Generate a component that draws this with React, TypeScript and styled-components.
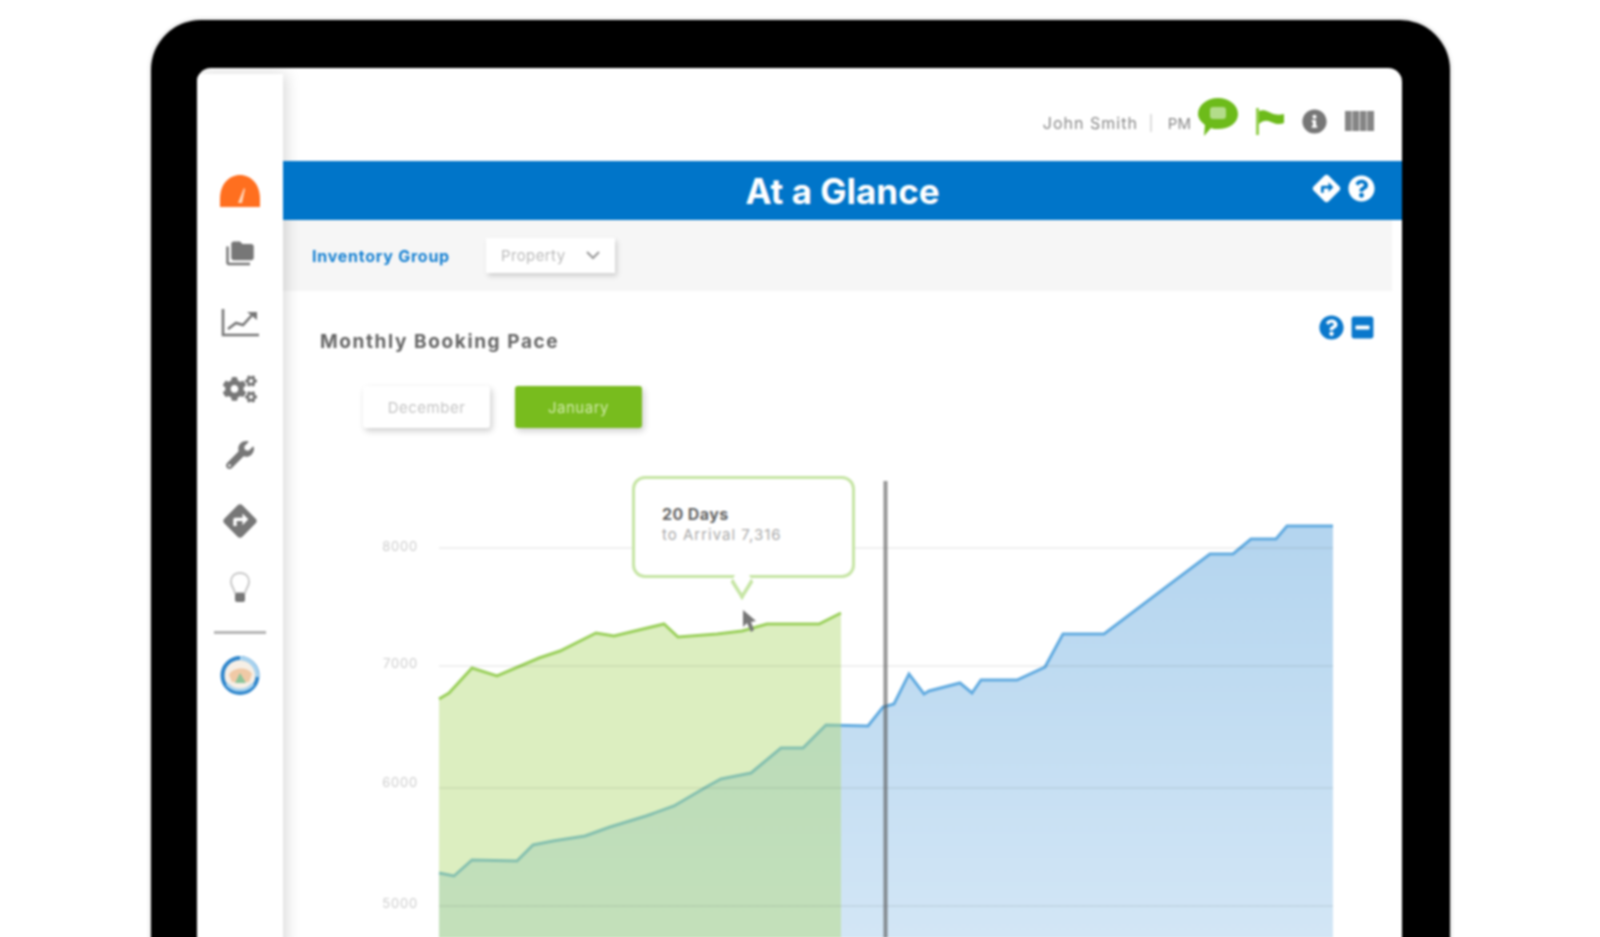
import React, { FC } from 'react';
import styled, { createGlobalStyle } from 'styled-components';
import { FaCogs, FaInfoCircle, FaMinusSquare, FaQuestionCircle, FaWrench } from 'react-icons/fa';
import { MdDirections, MdFolderCopy } from 'react-icons/md';

const GREEN_LINE = [
  [439, 698], [449, 692], [472, 667], [497, 675], [539, 657], [560, 650], [596, 632], [614, 635],
  [664, 623], [678, 636], [717, 633], [742, 630], [767, 623], [819, 623], [841, 612],
];
const BLUE_LINE = [
  [439, 872], [454, 875], [472, 859], [517, 860], [533, 844], [553, 840], [585, 835], [610, 826],
  [646, 815], [674, 805], [708, 785], [721, 778], [751, 772], [781, 747], [803, 747], [826, 724],
  [868, 725], [883, 706], [894, 703], [909, 673], [924, 693], [929, 690], [960, 682], [972, 692],
  [981, 679], [1017, 679], [1045, 666], [1063, 633], [1104, 633], [1210, 553], [1233, 553],
  [1251, 538], [1276, 538], [1287, 525], [1333, 525],
];
const GRID = [
  { y: 547, labelY: 546, label: '8000' },
  { y: 665, labelY: 663, label: '7000' },
  { y: 787, labelY: 782, label: '6000' },
  { y: 905, labelY: 903, label: '5000' },
];

const toPoints = (line: number[][]) => line.map(p => p.join(',')).join(' ');
const toArea = (line: number[][]) =>
  `${line[0][0]},937 ${toPoints(line)} ${line[line.length - 1][0]},937`;

const GaugeIcon: FC = () => (
  <svg width="40" height="32" viewBox="0 0 40 32">
    <path d="M0 32 V24 C0 9 9 0 20 0 C31 0 40 9 40 24 V32 Z" fill="#ff6f1f" />
    <path d="M18 28 L24 13 L25 14 L22 28 Z" fill="#ffd9bf" />
  </svg>
);

const TrendIcon: FC = () => (
  <svg width="38" height="28" viewBox="0 0 38 28" fill="none" stroke="#777" strokeWidth="2.6">
    <path d="M2 0 V26 H38" />
    <path d="M7 20 L15 14 L22 16 L32 5" />
    <path d="M26 3 H36 V11 Z" fill="#777" stroke="none" />
  </svg>
);

const BulbIcon: FC = () => (
  <svg width="20" height="31" viewBox="0 0 20 31">
    <path d="M10 1 C4 1 1 5 1 10 C1 14 4 16 5 21 H15 C16 16 19 14 19 10 C19 5 16 1 10 1 Z" fill="#fff" stroke="#c9c9c9" strokeWidth="2" />
    <rect x="5" y="21" width="10" height="9" rx="2" fill="#777" />
  </svg>
);

const GlobeIcon: FC = () => (
  <svg width="40" height="41" viewBox="0 0 40 41">
    <circle cx="20" cy="20.5" r="17.5" fill="#f6efe6" stroke="#2f86cc" strokeWidth="4" />
    <path d="M20 3 A17.5 17.5 0 0 1 37 22" fill="none" stroke="#a9d3ef" strokeWidth="4" />
    <path d="M9 20 C12 12 28 11 32 19 L29 27 L12 27 Z" fill="#f0c9a6" />
    <path d="M15 28 L20 18 L26 28 Z" fill="#8cc59a" />
    <path d="M7 29 A17 17 0 0 0 33 29" fill="none" stroke="#a9d3ef" strokeWidth="3" />
  </svg>
);

const ChatIcon: FC = () => (
  <svg width="40" height="38" viewBox="0 0 40 38">
    <path d="M20 0 C31 0 40 7 40 16 C40 25 31 31 20 31 C17 31 15 31 13 30 L6 38 L7 27 C3 24 0 20 0 16 C0 7 9 0 20 0 Z" fill="#6dbb1a" />
    <rect x="12" y="9" width="16" height="12" rx="3" fill="#b3dc8a" />
  </svg>
);

const FlagIcon: FC = () => (
  <svg width="28" height="27" viewBox="0 0 28 27">
    <rect x="0" y="0" width="3" height="27" fill="#95cf50" />
    <path d="M3 3 C8 1 11 3 15 5 C19 7 24 7 28 6 V15 C24 17 19 16 15 14 C11 12 7 12 3 16 Z" fill="#6dbb1a" />
  </svg>
);

const ColumnsIcon: FC = () => (
  <svg width="29" height="20" viewBox="0 0 29 20" fill="#858585">
    <rect x="0" y="0" width="6.6" height="20" />
    <rect x="7.4" y="0" width="6.6" height="20" />
    <rect x="14.8" y="0" width="6.6" height="20" />
    <rect x="22.2" y="0" width="6.8" height="20" />
  </svg>
);

const Chart: FC = () => (
  <svg width="1119" height="467" viewBox="283 470 1119 467" style={{ display: 'block' }}>
    <defs>
      <linearGradient id="blueFill" x1="0" y1="525" x2="0" y2="937" gradientUnits="userSpaceOnUse">
        <stop offset="0" stopColor="#5ba3dc" stopOpacity="0.46" />
        <stop offset="1" stopColor="#5ba3dc" stopOpacity="0.27" />
      </linearGradient>
    </defs>
    {GRID.map(g => (
      <text key={g.y} x="418" y={g.labelY + 4} textAnchor="end" fontSize="13" letterSpacing="0.8" fill="#cdcdcd" fontFamily="Inter, sans-serif">
        {g.label}
      </text>
    ))}
    <polygon points={toArea(BLUE_LINE)} fill="url(#blueFill)" />
    <polyline points={toPoints(BLUE_LINE)} fill="none" stroke="#62abe0" strokeWidth="3" />
    <polygon points={toArea(GREEN_LINE)} fill="#b1d973" fillOpacity="0.45" />
    <polyline points={toPoints(GREEN_LINE)} fill="none" stroke="#9bd05c" strokeWidth="3" />
    {GRID.map(g => (
      <line key={g.y} x1="439" x2="1333" y1={g.y} y2={g.y} stroke="#000" strokeOpacity="0.06" strokeWidth="2" />
    ))}
    <line x1="885.5" x2="885.5" y1="480" y2="937" stroke="#555" strokeOpacity="0.62" strokeWidth="4" />
    <path d="M743 609 L743 626 L747 622 L751 631 L754 629 L751 621 L756 620 Z" fill="#777" />
  </svg>
);

export default function App() {
  return (
    <Page>
      <GlobalStyle />
      <Device>
        <Screen>
          <Sidebar>
            <SideItem><GaugeIcon /></SideItem>
            <FolderItem><MdFolderCopy size={30} color="#777" /></FolderItem>
            <SideItem><TrendIcon /></SideItem>
            <SideItem><FaCogs size={34} color="#777" /></SideItem>
            <SideItem><FaWrench size={28} color="#777" /></SideItem>
            <SideItem><MdDirections size={40} color="#777" /></SideItem>
            <SideItem><BulbIcon /></SideItem>
            <SideRule />
            <GlobeWrap><GlobeIcon /></GlobeWrap>
          </Sidebar>
          <Main>
            <TopBar>
              <UserName>John Smith</UserName>
              <TopDivider />
              <Clock>PM</Clock>
              <ChatWrap><ChatIcon /></ChatWrap>
              <FlagIcon />
              <FaInfoCircle size={25} color="#777" />
              <ColumnsIcon />
            </TopBar>
            <TitleBar>
              <span />
              <PageTitle>At a Glance</PageTitle>
              <TitleActions>
                <MdDirections size={33} color="#fff" />
                <FaQuestionCircle size={27} color="#fff" />
              </TitleActions>
            </TitleBar>
            <FilterBar>
              <FilterLabel>Inventory Group</FilterLabel>
              <FilterSelect>
                Property
                <svg width="14" height="9" viewBox="0 0 14 9" fill="none" stroke="#999" strokeWidth="2">
                  <path d="M1 1 L7 7 L13 1" />
                </svg>
              </FilterSelect>
            </FilterBar>
            <SectionHead>
              <SectionTitle>Monthly Booking Pace</SectionTitle>
              <SectionActions>
                <FaQuestionCircle size={25} color="#0a78cc" />
                <FaMinusSquare size={25} color="#0a78cc" />
              </SectionActions>
            </SectionHead>
            <MonthRow>
              <MonthButton>December</MonthButton>
              <MonthButton $active>January</MonthButton>
            </MonthRow>
            <ChartWrap>
              <Chart />
              <Tooltip>
                <TooltipTitle>20 Days</TooltipTitle>
                <TooltipText>to Arrival 7,316</TooltipText>
              </Tooltip>
            </ChartWrap>
          </Main>
        </Screen>
      </Device>
    </Page>
  );
}

const GlobalStyle = createGlobalStyle`
  html, body {
    margin: 0;
    padding: 0;
    background: #fff;
    overflow: hidden;
  }
  body {
    font-family: Inter, "Open Sans", sans-serif;
  }
`;

const Page = styled.div`
  width: 1600px;
  height: 937px;
  overflow: hidden;
  background: #fff;
  padding: 20px 0 0 151px;
  box-sizing: border-box;
`;
const Device = styled.div`
  width: 1299px;
  height: 930px;
  box-sizing: border-box;
  padding: 48px 48px 0 46px;
  background: #000;
  border-radius: 50px 50px 0 0;
  box-shadow: 0 0 4px rgba(0, 0, 0, 0.25);
  filter: blur(1.2px);
`;
const Screen = styled.div`
  display: flex;
  height: 100%;
  background: #fff;
  border-radius: 14px 14px 0 0;
  overflow: hidden;
`;
const Sidebar = styled.div`
  position: relative;
  z-index: 1;
  flex: 0 0 86px;
  display: flex;
  flex-direction: column;
  align-items: center;
  padding: 84px 0 0 0;
  margin-top: 6px;
  box-sizing: border-box;
  background: #fff;
  box-shadow: 3px 0 14px rgba(0, 0, 0, 0.16);
`;
const SideItem = styled.div`
  flex: 0 0 66px;
  display: flex;
  align-items: center;
  justify-content: center;
  width: 100%;
  box-sizing: border-box;
`;
const FolderItem = styled(SideItem)`
  padding-bottom: 6px;
`;
const SideRule = styled.div`
  flex: 0 0 3px;
  width: 52px;
  margin-top: 11px;
  background: #b5b5b5;
`;
const GlobeWrap = styled.div`
  display: flex;
  margin-top: 21px;
`;
const Main = styled.div`
  flex: 1 1 auto;
  min-width: 0;
`;
const TopBar = styled.div`
  height: 93px;
  box-sizing: border-box;
  padding: 13px 28px 0 0;
  display: flex;
  align-items: center;
  justify-content: flex-end;
  gap: 18px;
  color: #888;
`;
const UserName = styled.span`
  font-size: 16px;
  letter-spacing: 1px;
  margin-top: 4px;
`;
const TopDivider = styled.span`
  width: 2px;
  height: 18px;
  margin: 4px 0 0 -6px;
  background: #ddd;
`;
const Clock = styled.span`
  font-size: 15px;
  margin: 4px -11px 0 -2px;
`;
const ChatWrap = styled.div`
  display: flex;
  margin-bottom: 8px;
`;
const TitleBar = styled.div`
  position: relative;
  z-index: 2;
  height: 59px;
  display: grid;
  grid-template-columns: 1fr auto 1fr;
  align-items: center;
  background: #0075c9;
`;
const PageTitle = styled.h1`
  margin: 0;
  font-size: 35px;
  font-weight: 700;
  color: #fff;
`;
const TitleActions = styled.div`
  justify-self: end;
  display: flex;
  align-items: center;
  gap: 5px;
  margin: -4px 27px 0 0;
`;
const FilterBar = styled.div`
  height: 71px;
  margin-right: 10px;
  padding: 0 0 0 29px;
  display: flex;
  align-items: center;
  gap: 36px;
  background: #f6f6f6;
`;
const FilterLabel = styled.span`
  font-size: 16px;
  font-weight: 700;
  letter-spacing: 0.75px;
  color: #1580d2;
`;
const FilterSelect = styled.div`
  width: 129px;
  height: 35px;
  box-sizing: border-box;
  padding: 0 15px 0 15px;
  display: flex;
  align-items: center;
  justify-content: space-between;
  background: #fff;
  color: #bbb;
  font-size: 15px;
  letter-spacing: 0.4px;
  box-shadow: 2px 3px 5px rgba(0, 0, 0, 0.16);
`;
const SectionHead = styled.div`
  display: flex;
  align-items: flex-start;
  justify-content: space-between;
  padding: 24px 27px 0 37px;
`;
const SectionTitle = styled.h2`
  margin: 14px 0 0;
  font-size: 19px;
  line-height: 26px;
  font-weight: 700;
  letter-spacing: 1.6px;
  color: #666;
`;
const SectionActions = styled.div`
  display: flex;
  align-items: center;
  gap: 6px;
`;
const MonthRow = styled.div`
  display: flex;
  gap: 25px;
  padding: 31px 0 0 80px;
`;
const MonthButton = styled.div<{ $active?: boolean }>`
  width: 127px;
  height: 42px;
  display: flex;
  align-items: center;
  justify-content: center;
  border-radius: 3px;
  font-size: 15px;
  letter-spacing: 0.5px;
  background: ${({ $active }) => ($active ? '#78bc1e' : '#fff')};
  color: ${({ $active }) => ($active ? '#cfe9a8' : '#c4c4c4')};
  box-shadow: 2px 3px 6px rgba(0, 0, 0, 0.2);
`;
const ChartWrap = styled.div`
  position: relative;
  margin-top: 43px;
`;
const Tooltip = styled.div`
  position: absolute;
  left: 349px;
  top: 5px;
  width: 223px;
  height: 102px;
  box-sizing: border-box;
  padding: 25px 0 0 27px;
  background: #fff;
  border: 3px solid #c6e5a4;
  border-radius: 13px;
  &::after {
    content: '';
    position: absolute;
    left: 99px;
    bottom: -15px;
    width: 16px;
    height: 16px;
    box-sizing: border-box;
    background: #fff;
    border-right: 3px solid #c6e5a4;
    border-bottom: 3px solid #c6e5a4;
    transform: scaleY(1.6) rotate(45deg);
  }
`;
const TooltipTitle = styled.div`
  font-size: 16px;
  line-height: 20px;
  font-weight: 700;
  letter-spacing: 0.4px;
  color: #666;
`;
const TooltipText = styled.div`
  font-size: 15px;
  line-height: 21px;
  letter-spacing: 1px;
  color: #aaa;
`;
